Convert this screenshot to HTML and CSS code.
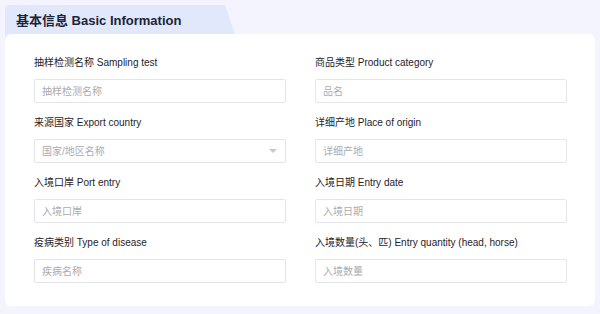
FILE: index.html
```html
<!DOCTYPE html>
<html lang="zh-CN">
  <head>
    <meta charset="UTF-8" />
    <meta name="viewport" content="width=device-width, initial-scale=1.0" />
    <title>基本信息</title>
    <link rel="stylesheet" href="styles.css">
  </head>
  <body>
    <div class="section">
      <div class="tab"><h3>基本信息 Basic Information</h3></div>
      <div class="card">
        <div class="form-grid">
          <label class="field">
            <span class="label">抽样检测名称 Sampling test</span>
            <input type="text" placeholder="抽样检测名称" />
          </label>
          <label class="field">
            <span class="label">商品类型 Product category</span>
            <input type="text" placeholder="品名" />
          </label>
          <label class="field">
            <span class="label">来源国家 Export country</span>
            <span class="select">
              <input type="text" placeholder="国家/地区名称" readonly />
              <span class="arrow"></span>
            </span>
          </label>
          <label class="field">
            <span class="label">详细产地 Place of origin</span>
            <input type="text" placeholder="详细产地" />
          </label>
          <label class="field">
            <span class="label">入境口岸 Port entry</span>
            <input type="text" placeholder="入境口岸" />
          </label>
          <label class="field">
            <span class="label">入境日期 Entry date</span>
            <input type="text" placeholder="入境日期" />
          </label>
          <label class="field">
            <span class="label">疫病类别 Type of disease</span>
            <input type="text" placeholder="疾病名称" />
          </label>
          <label class="field">
            <span class="label">入境数量(头、匹) Entry quantity (head, horse)</span>
            <input type="text" placeholder="入境数量" />
          </label>
        </div>
      </div>
    </div>
  </body>
</html>
```

FILE: styles.css
```css
* {
  box-sizing: border-box;
}
html,
body {
  margin: 0;
  padding: 0;
}
body {
  background: #f3f4fd;
  font-family: "Liberation Sans", "Noto Sans CJK SC", sans-serif;
  color: #303133;
  padding: 5px;
  width: 600px;
  height: 314px;
}
.section {
  position: relative;
}
.tab {
  width: 232px;
  height: 35px;
  background: #e2e8fb;
  border-top-left-radius: 4px;
  clip-path: polygon(0 0, 220px 0, 232px 100%, 0 100%);
  padding-left: 11px;
  margin-bottom: -6px;
}
.tab h3 {
  margin: 0;
  font-size: 13px;
  line-height: 31px;
  font-weight: bold;
  color: #1c2438;
}
.card {
  position: relative;
  background: #ffffff;
  border-radius: 6px;
  padding: 21px 28px 23px 29px;
}
.form-grid {
  display: grid;
  grid-template-columns: 252px 252px;
  column-gap: 29px;
  row-gap: 12px;
}
.field {
  display: flex;
  flex-direction: column;
}
.label {
  font-size: 10px;
  line-height: 16px;
  margin-bottom: 8px;
  color: #1f2329;
}
.field input {
  width: 100%;
  height: 24px;
  border: 1px solid #e3e5ea;
  border-radius: 2px;
  padding: 0 7px;
  font-family: inherit;
  font-size: 10px;
  color: #303133;
  background: #ffffff;
  outline: none;
}
.field input::placeholder {
  color: #a9acb2;
}
.select {
  position: relative;
  display: block;
}
.arrow {
  position: absolute;
  right: 9px;
  top: 10px;
  width: 0;
  height: 0;
  border-left: 4px solid transparent;
  border-right: 4px solid transparent;
  border-top: 4px solid #c6c9cf;
}
```
